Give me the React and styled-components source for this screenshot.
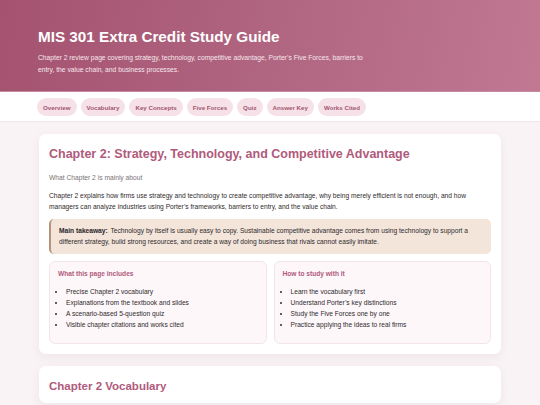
import React from 'react'
import styled, { createGlobalStyle } from 'styled-components'

const GlobalStyle = createGlobalStyle`
    html, body {
        margin: 0;
        padding: 0;
        background: #f9f3f5;
        font-family: "Liberation Sans", Arial, sans-serif;
        color: #2f2a2d;
    }
    * {
        box-sizing: border-box;
    }
`

const Header = styled.header`
    background: linear-gradient(100deg, #a4526f 0%, #b06580 50%, #c07893 100%);
    padding: 28px 38px 15px;
    color: #fff;
    border-bottom: 1px solid #c58aa0;
    h1 {
        margin: 0;
        font-size: 15.25px;
        line-height: 18px;
        font-weight: 700;
    }
    p {
        margin: 6px 0 0;
        font-size: 6.72px;
        line-height: 12px;
        max-width: 340px;
        color: #f6e6ec;
    }
`

const Nav = styled.nav`
    display: flex;
    gap: 4px;
    background: #fff;
    padding: 6px 37px 5px;
    border-bottom: 1px solid #efe6ea;
`

const Pill = styled.a`
    display: flex;
    align-items: center;
    height: 18px;
    padding: 0 6px;
    border-radius: 9px;
    background: #f6e1e8;
    color: #a2566f;
    font-size: 6.2px;
    font-weight: 700;
    text-decoration: none;
`

const Main = styled.main`
    display: flex;
    flex-direction: column;
    gap: 12px;
    padding: 12px 39px;
`

const Card = styled.section`
    background: #fff;
    border-radius: 7px;
    padding: 13px 10px 10px;
    box-shadow: 0 3px 10px rgba(120, 80, 100, 0.08);
    h2 {
        margin: 0;
        font-size: ${p => p.$small ? '11.5px' : '12.5px'};
        line-height: ${p => p.$small ? '14px' : '15px'};
        color: #b05a7c;
        font-weight: 700;
    }
`

const Label = styled.div`
    margin-top: 10px;
    font-size: 6.7px;
    line-height: 11px;
    color: #7a7275;
`

const Paragraph = styled.p`
    margin: 7px 0 0;
    font-size: 6.65px;
    line-height: 11.3px;
    color: #2f2a2d;
`

const Takeaway = styled.div`
    margin-top: 6px;
    background: #f3e5da;
    border-left: 2px solid #b8917a;
    border-radius: 5px;
    padding: 6px 8px;
    font-size: 6.65px;
    line-height: 11.5px;
    b {
        color: #2a2326;
        margin-right: 1px;
    }
`

const Columns = styled.div`
    display: grid;
    grid-template-columns: 1fr 1fr;
    gap: 7px;
    margin-top: 7px;
`

const InfoBox = styled.div`
    background: #fdf7f9;
    border: 1px solid #f3e4ea;
    border-radius: 6px;
    padding: 6px 8px 13px;
    h3 {
        margin: 0;
        font-size: 6.6px;
        line-height: 11px;
        color: #b05a7c;
        font-weight: 700;
    }
    ul {
        margin: 7px 0 0;
        padding-left: 8px;
        list-style: disc;
    }
    li {
        font-size: 6.65px;
        line-height: 11px;
        color: #2f2a2d;
    }
`

const navItems = ['Overview', 'Vocabulary', 'Key Concepts', 'Five Forces', 'Quiz', 'Answer Key', 'Works Cited']

const includes = [
    'Precise Chapter 2 vocabulary',
    'Explanations from the textbook and slides',
    'A scenario-based 5-question quiz',
    'Visible chapter citations and works cited',
]

const study = [
    'Learn the vocabulary first',
    'Understand Porter\u2019s key distinctions',
    'Study the Five Forces one by one',
    'Practice applying the ideas to real firms',
]

export default function App() {
    return (
        <>
            <GlobalStyle />
            <Header>
                <h1>MIS 301 Extra Credit Study Guide</h1>
                <p>Chapter 2 review page covering strategy, technology, competitive advantage, Porter&rsquo;s Five Forces, barriers to entry, the value chain, and business processes.</p>
            </Header>
            <Nav>
                {navItems.map(item => <Pill key={item} href={'#' + item}>{item}</Pill>)}
            </Nav>
            <Main>
                <Card>
                    <h2>Chapter 2: Strategy, Technology, and Competitive Advantage</h2>
                    <Label>What Chapter 2 is mainly about</Label>
                    <Paragraph>Chapter 2 explains how firms use strategy and technology to create competitive advantage, why being merely efficient is not enough, and how managers can analyze industries using Porter&rsquo;s frameworks, barriers to entry, and the value chain.</Paragraph>
                    <Takeaway>
                        <b>Main takeaway:</b> Technology by itself is usually easy to copy. Sustainable competitive advantage comes from using technology to support a different strategy, build strong resources, and create a way of doing business that rivals cannot easily imitate.
                    </Takeaway>
                    <Columns>
                        <InfoBox>
                            <h3>What this page includes</h3>
                            <ul>{includes.map(t => <li key={t}>{t}</li>)}</ul>
                        </InfoBox>
                        <InfoBox>
                            <h3>How to study with it</h3>
                            <ul>{study.map(t => <li key={t}>{t}</li>)}</ul>
                        </InfoBox>
                    </Columns>
                </Card>
                <Card $small>
                    <h2>Chapter 2 Vocabulary</h2>
                </Card>
            </Main>
        </>
    )
}
